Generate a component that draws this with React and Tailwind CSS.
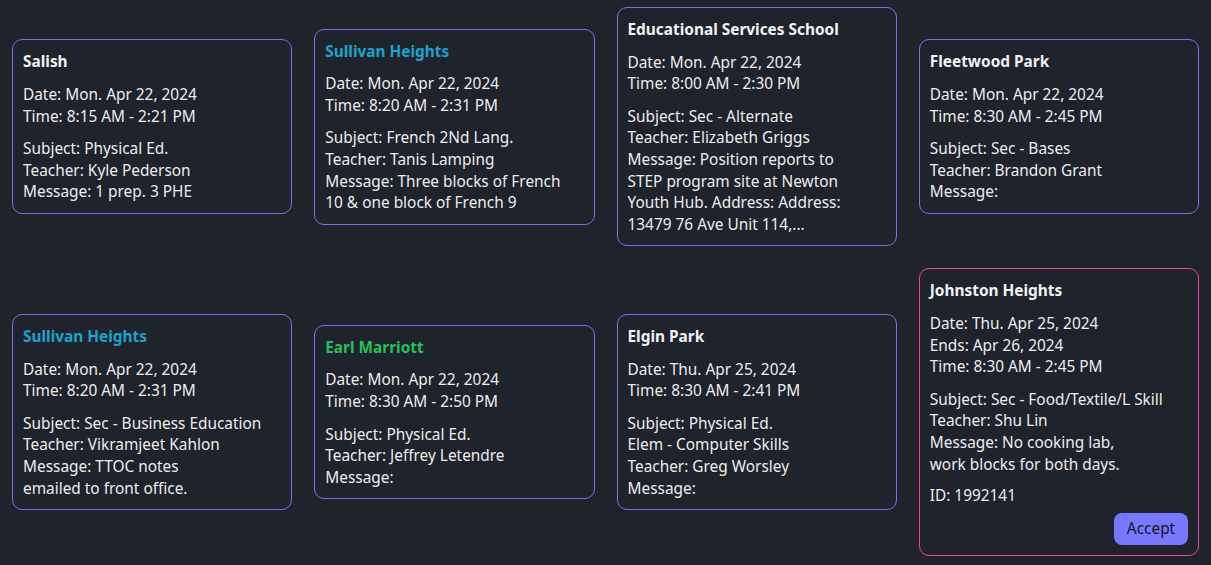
import React from "react";

const cards = [
  {
    title: "Salish",
    color: "text-[#f2f2f2]",
    dates: ["Date: Mon. Apr 22, 2024", "Time: 8:15 AM - 2:21 PM"],
    info: ["Subject: Physical Ed.", "Teacher: Kyle Pederson", "Message: 1 prep. 3 PHE"],
  },
  {
    title: "Sullivan Heights",
    color: "text-[#1ba3cf]",
    dates: ["Date: Mon. Apr 22, 2024", "Time: 8:20 AM - 2:31 PM"],
    info: [
      "Subject: French 2Nd Lang.",
      "Teacher: Tanis Lamping",
      "Message: Three blocks of French",
      "10 & one block of French 9",
    ],
  },
  {
    title: "Educational Services School",
    color: "text-[#f2f2f2]",
    dates: ["Date: Mon. Apr 22, 2024", "Time: 8:00 AM - 2:30 PM"],
    info: [
      "Subject: Sec - Alternate",
      "Teacher: Elizabeth Griggs",
      "Message: Position reports to",
      "STEP program site at Newton",
      "Youth Hub. Address: Address:",
      "13479 76 Ave Unit 114,...",
    ],
  },
  {
    title: "Fleetwood Park",
    color: "text-[#f2f2f2]",
    dates: ["Date: Mon. Apr 22, 2024", "Time: 8:30 AM - 2:45 PM"],
    info: ["Subject: Sec - Bases", "Teacher: Brandon Grant", "Message:"],
  },
  {
    title: "Sullivan Heights",
    color: "text-[#1ba3cf]",
    dates: ["Date: Mon. Apr 22, 2024", "Time: 8:20 AM - 2:31 PM"],
    info: [
      "Subject: Sec - Business Education",
      "Teacher: Vikramjeet Kahlon",
      "Message: TTOC notes",
      "emailed to front office.",
    ],
  },
  {
    title: "Earl Marriott",
    color: "text-[#27bf5a]",
    dates: ["Date: Mon. Apr 22, 2024", "Time: 8:30 AM - 2:50 PM"],
    info: ["Subject: Physical Ed.", "Teacher: Jeffrey Letendre", "Message:"],
  },
  {
    title: "Elgin Park",
    color: "text-[#f2f2f2]",
    dates: ["Date: Thu. Apr 25, 2024", "Time: 8:30 AM - 2:41 PM"],
    info: [
      "Subject: Physical Ed.",
      "Elem - Computer Skills",
      "Teacher: Greg Worsley",
      "Message:",
    ],
  },
  {
    title: "Johnston Heights",
    color: "text-[#f2f2f2]",
    pink: true,
    dates: ["Date: Thu. Apr 25, 2024", "Ends: Apr 26, 2024", "Time: 8:30 AM - 2:45 PM"],
    info: [
      "Subject: Sec - Food/Textile/L Skill",
      "Teacher: Shu Lin",
      "Message: No cooking lab,",
      "work blocks for both days.",
    ],
    id: "ID: 1992141",
  },
];

function Card({ c }) {
  return (
    <div
      className={`rounded-[10px] border px-[10px] pt-[11px] pb-[10px] flex flex-col ${
        c.pink ? "border-[#ee46a6]" : "border-[#7373f2]"
      }`}
    >
      <div className={`font-bold text-[15.4px] leading-[21.6px] whitespace-nowrap ${c.color}`}>
        {c.title}
      </div>
      <div className="mt-[11px]">
        {c.dates.map((d, i) => (
          <div key={i} className="whitespace-nowrap">
            {d}
          </div>
        ))}
      </div>
      <div className="mt-[11px]">
        {c.info.map((d, i) => (
          <div key={i} className="whitespace-nowrap">
            {d}
          </div>
        ))}
      </div>
      {c.id && <div className="mt-[10px]">{c.id}</div>}
      {c.id && (
        <div className="flex justify-end mt-[6px]">
          <button className="h-8 w-[74px] rounded-lg bg-[#7777ff] text-[#161622] text-[15.4px] leading-[21.6px]">
            Accept
          </button>
        </div>
      )}
    </div>
  );
}

export default function App() {
  return (
    <div
      className="w-[1211px] h-[565px] bg-[#1f232b] text-[#ededee] text-[15.4px] leading-[21.6px] overflow-hidden"
      style={{ fontFamily: '"Noto Sans", sans-serif' }}
    >
      <div className="grid grid-cols-4 gap-x-[22px] gap-y-[22px] items-center px-3 pt-[7px]">
        {cards.map((c, i) => (
          <Card key={i} c={c} />
        ))}
      </div>
    </div>
  );
}
